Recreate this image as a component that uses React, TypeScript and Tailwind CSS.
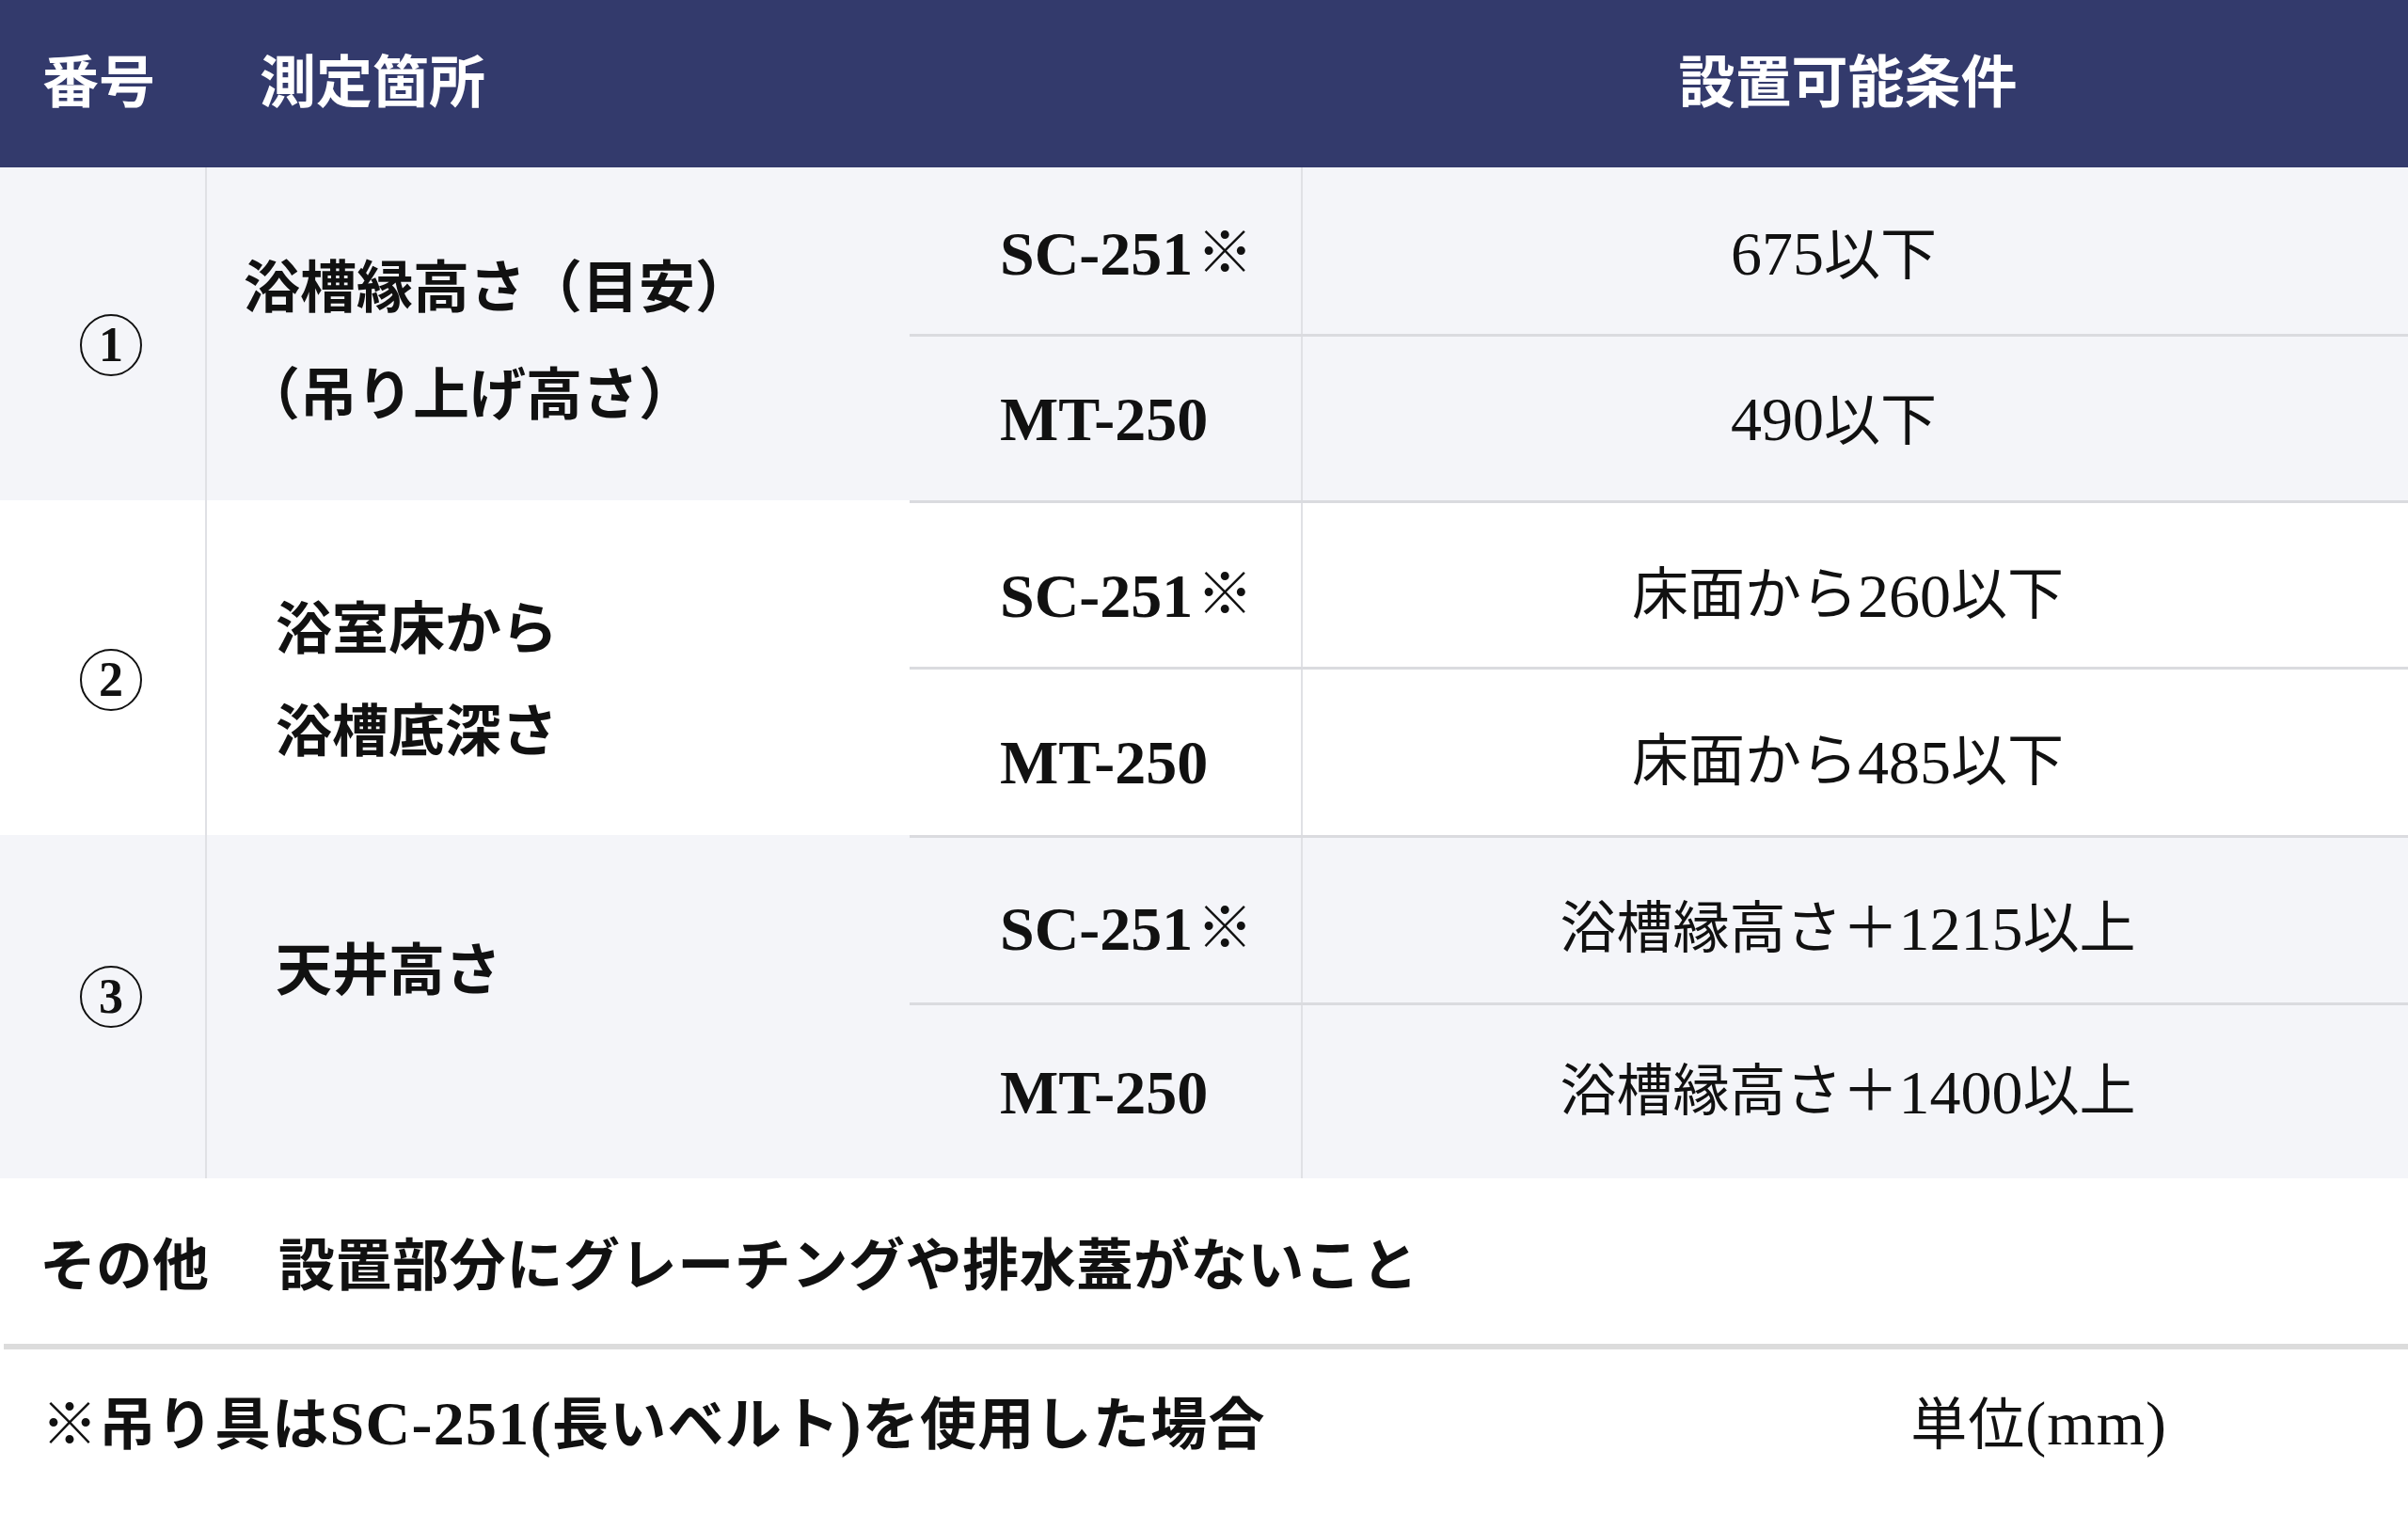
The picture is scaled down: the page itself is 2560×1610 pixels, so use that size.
import type { ReactNode } from "react";

// latin runs are set a little larger than the kanji, like the reference
function N({ children }: { children: ReactNode }) {
  return <span className="text-[66px]">{children}</span>;
}

function Circled({ n }: { n: string }) {
  return (
    <div className="w-[66px] h-[66px] rounded-full border-2 border-[#111] flex items-center justify-center">
      <span className="text-[52px] font-bold leading-none">{n}</span>
    </div>
  );
}

type Row = { model: string; mark?: boolean; cond: ReactNode };

type GroupProps = {
  no: string;
  bg: string;
  h: string;
  numPt: string;
  textBox: string;
  lines: string[];
  topLine?: boolean;
  sub1: string;
  sub1Pad?: string;
  sub2Pad?: string;
  rows: Row[];
};

function Cells({ row, pad }: { row: Row; pad?: string }) {
  return (
    <>
      <div className={`w-[418px] border-r-2 border-[#e0e1e5] flex items-center pl-[96px] font-bold ${pad ?? ""}`}>
        <N>{row.model}</N>
        {row.mark && <span className="ml-[4px]">※</span>}
      </div>
      <div className={`flex-1 flex items-center justify-center pr-[16px] ${pad ?? ""}`}>{row.cond}</div>
    </>
  );
}

function Group(p: GroupProps) {
  return (
    <div className={`flex ${p.h} ${p.bg}`}>
      <div className={`w-[220px] border-r-2 border-[#e0e1e5] pl-[85px] ${p.numPt}`}>
        <Circled n={p.no} />
      </div>
      <div className={`w-[747px] font-bold ${p.textBox}`}>
        {p.lines.map((l) => (
          <div key={l}>{l}</div>
        ))}
      </div>
      <div className={`flex-1 flex flex-col ${p.topLine ? "border-t-[3px] border-[#dadbdf]" : ""}`}>
        <div className={`flex ${p.sub1}`}>
          <Cells row={p.rows[0]} pad={p.sub1Pad} />
        </div>
        <div className="flex flex-1 border-t-[3px] border-[#dadbdf]">
          <Cells row={p.rows[1]} pad={p.sub2Pad} />
        </div>
      </div>
    </div>
  );
}

export default function App() {
  return (
    <main className="w-[2560px] h-[1610px] bg-white text-[#111] text-[60px] font-['Liberation_Serif','Noto_Sans_CJK_JP',serif] overflow-hidden">
      {/* header */}
      <div className="flex h-[178px] items-center bg-[#333a6c] text-white font-bold">
        <div className="w-[220px] pl-[45px]">番号</div>
        <div className="w-[747px] pl-[56px]">測定箇所</div>
        <div className="w-[418px]" />
        <div className="flex-1 text-center pr-[16px]">設置可能条件</div>
      </div>

      <Group
        no="1"
        bg="bg-[#f4f5f9]"
        h="h-[354px]"
        numPt="pt-[156px]"
        textBox="pl-[39px] pt-[72px] leading-[114px]"
        lines={["浴槽縁高さ（目安）", "（吊り上げ高さ）"]}
        sub1="h-[177px]"
        sub1Pad="pt-[6px]"
        rows={[
          { model: "SC-251", mark: true, cond: <span className="mr-[30px]"><N>675</N>以下</span> },
          { model: "MT-250", cond: <span className="mr-[30px]"><N>490</N>以下</span> },
        ]}
      />

      <Group
        no="2"
        bg="bg-white"
        h="h-[356px]"
        numPt="pt-[158px]"
        textBox="pl-[73px] pt-[84px] leading-[109px]"
        lines={["浴室床から", "浴槽底深さ"]}
        topLine
        sub1="h-[174px]"
        sub1Pad="pt-[22px]"
        sub2Pad="pt-[20px]"
        rows={[
          { model: "SC-251", mark: true, cond: <>床面から<N>260</N>以下</> },
          { model: "MT-250", cond: <>床面から<N>485</N>以下</> },
        ]}
      />

      <Group
        no="3"
        bg="bg-[#f4f5f9]"
        h="h-[365px]"
        numPt="pt-[139px]"
        textBox="pl-[73px] pt-[91px] leading-[109px]"
        lines={["天井高さ"]}
        topLine
        sub1="h-[175px]"
        sub1Pad="pt-[18px]"
        rows={[
          { model: "SC-251", mark: true, cond: <>浴槽縁高さ＋<N>1215</N>以上</> },
          { model: "MT-250", cond: <>浴槽縁高さ＋<N>1400</N>以上</> },
        ]}
      />

      {/* notes */}
      <div className="flex h-[176px] items-center pl-[42px] pt-[12px] font-bold">
        <span>その他</span>
        <span className="ml-[74px] tracking-[0.6px]">設置部分にグレーチングや排水蓋がないこと</span>
      </div>
      <div className="ml-[4px] h-[6px] bg-[#dcdcdc]" />
      <div className="flex h-[175px] items-center justify-between pl-[44px] pr-[256px] pb-[18px]">
        <span className="font-bold tracking-[1.3px]">
          ※吊り具は<N>SC-251(</N>長いベルト<N>)</N>を使用した場合
        </span>
        <span className="tracking-[1px]">
          単位<N>(mm)</N>
        </span>
      </div>
    </main>
  );
}
